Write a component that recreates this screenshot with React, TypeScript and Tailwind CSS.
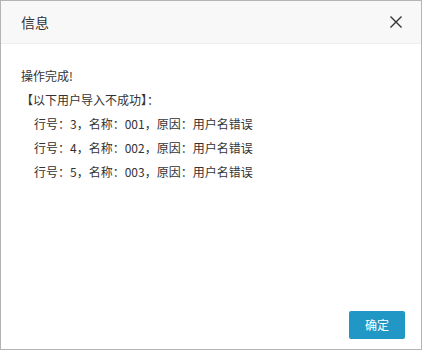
export default function App() {
  const rows = [
    { line: 3, name: "001" },
    { line: 4, name: "002" },
    { line: 5, name: "003" },
  ];

  return (
    <div className="w-[422px] h-[352px] bg-white" style={{ fontFamily: '"Noto Sans CJK SC", "Noto Sans", sans-serif' }}>
      <div className="w-[422px] h-[350px] border border-[#b4b4b4] flex flex-col text-[#333]">
        <div className="h-[43px] shrink-0 bg-[#f8f8f8] border-b border-[#eeeeee] flex items-center justify-between pl-[20px] pr-[19px]">
          <span className="text-[14px] leading-none">信息</span>
          <button type="button" className="w-[12px] h-[12px] flex items-center justify-center">
            <svg width="12" height="12" viewBox="0 0 12 12">
              <path d="M0.5 0.5L11.5 11.5M11.5 0.5L0.5 11.5" stroke="#333" strokeWidth="1.4" fill="none" />
            </svg>
          </button>
        </div>
        <div className="flex-1 pt-[20px] px-[20px] text-[12px] leading-[24px]">
          <div>操作完成!</div>
          <div>【以下用户导入不成功】：</div>
          {rows.map((r) => (
            <div key={r.line} className="pl-[13px]">
              行号：{r.line}，名称：{r.name}，原因：用户名错误
            </div>
          ))}
        </div>
        <div className="flex justify-end pr-[16px] pb-[10px]">
          <button type="button" className="w-[56px] h-[28px] rounded-[2px] bg-[#2197c6] text-white text-[12px] leading-[28px]">
            确定
          </button>
        </div>
      </div>
    </div>
  );
}
